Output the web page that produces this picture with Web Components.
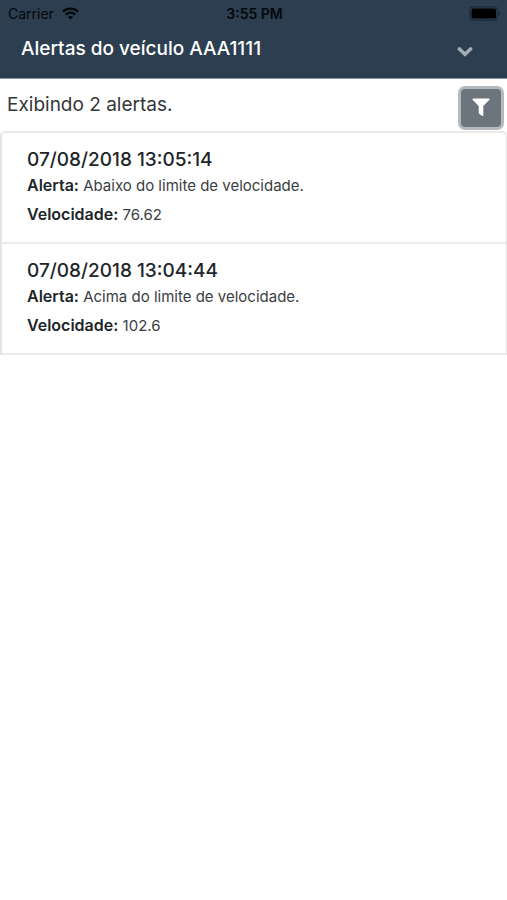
<!DOCTYPE html>
<html lang="pt-BR">
<head>
<meta charset="utf-8">
<meta name="viewport" content="width=device-width, initial-scale=1">
<title>Alertas</title>
<style>
  body {
    margin: 0;
    background-color: #fff;
    color: #212529;
    font-family: Inter, "Liberation Sans", sans-serif;
  }
</style>
</head>
<body>
<alert-page></alert-page>

<script>
class StatusBar extends HTMLElement {

  constructor() {
    super();
    this.shadowDOM = this.attachShadow({ mode: 'open' });
    this.render();
  }

  render() {
    this.shadowDOM.innerHTML = `
      <style>
        :host {
          display: grid;
          grid-template-columns: 1fr auto 1fr;
          align-items: center;
          height: 26px;
          padding: 0 6px 2px 8px;
          color: #05080c;
          font-size: 14px;
        }
        .carrier {
          display: flex;
          align-items: center;
          gap: 8px;
        }
        .time {
          font-weight: 600;
        }
        svg {
          display: block;
        }
        .battery {
          justify-self: end;
        }
      </style>

      <div class="carrier">
        <span>Carrier</span>
        <svg width="17" height="13" viewBox="0 0 17 13" fill="none" stroke="currentColor" stroke-width="2.4" aria-hidden="true">
          <path d="M1 4.6C5.2.6 11.8.6 16 4.6"/>
          <path d="M3.8 7.6c2.7-2.5 6.7-2.5 9.4 0"/>
          <path d="M8.5 12.6 5.9 10c1.5-1.3 3.7-1.3 5.2 0z" fill="currentColor" stroke="none"/>
        </svg>
      </div>
      <span class="time"><slot></slot></span>
      <svg class="battery" width="32" height="15" viewBox="0 0 32 15" aria-hidden="true">
        <rect x=".8" y=".8" width="27.4" height="13.4" rx="3.5" fill="none" stroke="#1c2a39" stroke-width="1.2"/>
        <rect x="2.5" y="2.5" width="24.5" height="10" rx="1.5" fill="#000"/>
        <path d="M29.5 5c2 .8 2 4.2 0 5z" fill="#1c2a39"/>
      </svg>
    `;
  }
}

class AppHeader extends HTMLElement {

  constructor() {
    super();
    this.shadowDOM = this.attachShadow({ mode: 'open' });
    this.render();
  }

  render() {
    this.shadowDOM.innerHTML = `
      <style>
        :host {
          display: block;
          background-color: #2c3e50;
          border-bottom: 1px solid #8497ab;
        }
        .bar {
          display: flex;
          justify-content: space-between;
          align-items: flex-start;
          height: 50px;
          padding: 0 30px 0 21px;
        }
        h1 {
          margin: 6px 0 0;
          color: #fff;
          font-size: 19px;
          font-weight: 500;
          line-height: 30px;
        }
        button {
          display: flex;
          margin: 8px 0 0;
          padding: 8px 4px;
          border: 0;
          background: none;
          color: #a3adb8;
        }
      </style>

      <status-bar>3:55 PM</status-bar>
      <div class="bar">
        <h1><slot></slot></h1>
        <button type="button" aria-label="Menu">
          <svg width="16" height="16" viewBox="0 0 16 16" fill="none" stroke="currentColor" stroke-width="3.6" stroke-linecap="round" aria-hidden="true">
            <path d="M2.4 5 8 10.3 13.6 5"/>
          </svg>
        </button>
      </div>
    `;
  }
}

class FilterButton extends HTMLElement {

  constructor() {
    super();
    this.shadowDOM = this.attachShadow({ mode: 'open' });
    this.render();
  }

  render() {
    this.shadowDOM.innerHTML = `
      <style>
        :host {
          display: block;
        }
        button {
          display: flex;
          justify-content: center;
          align-items: center;
          width: 40px;
          height: 38px;
          padding: 0 0 2px;
          border: 0;
          border-radius: 4px;
          box-shadow: 0 0 0 3px #b5babe;
          background-color: #6c757d;
          color: #fff;
        }
      </style>

      <button type="button" aria-label="Filtrar">
        <svg width="18" height="18" viewBox="0 0 18 18" fill="currentColor" aria-hidden="true">
          <path d="M1.2.4h15.6c.8 0 1.1.9.6 1.4L11.3 8v9c0 .8-.8 1.1-1.4.7l-2.6-1.9c-.4-.3-.6-.6-.6-1.1V8L.6 1.8C.1 1.3.4.4 1.2.4z"/>
        </svg>
      </button>
    `;
  }
}

class AlertItem extends HTMLElement {

  constructor() {
    super();
    this.shadowDOM = this.attachShadow({ mode: 'open' });
  }

  set alert(alert) {
    this._alert = alert;
    this.render();
  }

  render() {
    this.shadowDOM.innerHTML = `
      <style>
        :host {
          display: block;
          padding: 15px 25px;
          border-bottom: 2px solid #ebebeb;
        }
        h2 {
          margin: 0 0 2px;
          font-size: 19px;
          font-weight: 500;
          line-height: 24px;
        }
        p {
          margin: 0 0 5px;
          font-size: 15px;
          line-height: 24px;
        }
        p:last-child {
          margin: 0;
        }
        b {
          font-size: 16px;
          font-weight: 600;
          line-height: 20px;
        }
        span {
          color: #3a3e42;
        }
      </style>

      <h2>${this._alert.date}</h2>
      <p><b>Alerta:</b> <span>${this._alert.message}</span></p>
      <p><b>Velocidade:</b> <span>${this._alert.speed}</span></p>
    `;
  }
}

class AlertPage extends HTMLElement {

  constructor() {
    super();
    this.shadowDOM = this.attachShadow({ mode: 'open' });
    this.alerts = [
      { date: '07/08/2018 13:05:14', message: 'Abaixo do limite de velocidade.', speed: '76.62' },
      { date: '07/08/2018 13:04:44', message: 'Acima do limite de velocidade.', speed: '102.6' }
    ];
    this.render();
  }

  render() {
    this.shadowDOM.innerHTML = `
      <style>
        :host {
          display: block;
        }
        .summary {
          display: flex;
          justify-content: space-between;
          align-items: flex-start;
          padding: 10px 6px 4px 7px;
        }
        .summary p {
          margin: 0;
          color: #333639;
          font-size: 19px;
          line-height: 32px;
        }
        .list {
          border: solid #e4e4e4;
          border-width: 2px 1px 0 2px;
          border-top-color: #ebebeb;
          border-radius: 5px 5px 0 0;
        }
      </style>

      <app-header>Alertas do veículo AAA1111</app-header>
      <main>
        <div class="summary">
          <p>Exibindo ${this.alerts.length} alertas.</p>
          <filter-button></filter-button>
        </div>
        <div class="list"></div>
      </main>
    `;

    const list = this.shadowDOM.querySelector('.list');
    this.alerts.forEach(alert => {
      const item = document.createElement('alert-item');
      item.alert = alert;
      list.appendChild(item);
    });
  }
}

customElements.define('status-bar', StatusBar);
customElements.define('app-header', AppHeader);
customElements.define('filter-button', FilterButton);
customElements.define('alert-item', AlertItem);
customElements.define('alert-page', AlertPage);
</script>
</body>
</html>
